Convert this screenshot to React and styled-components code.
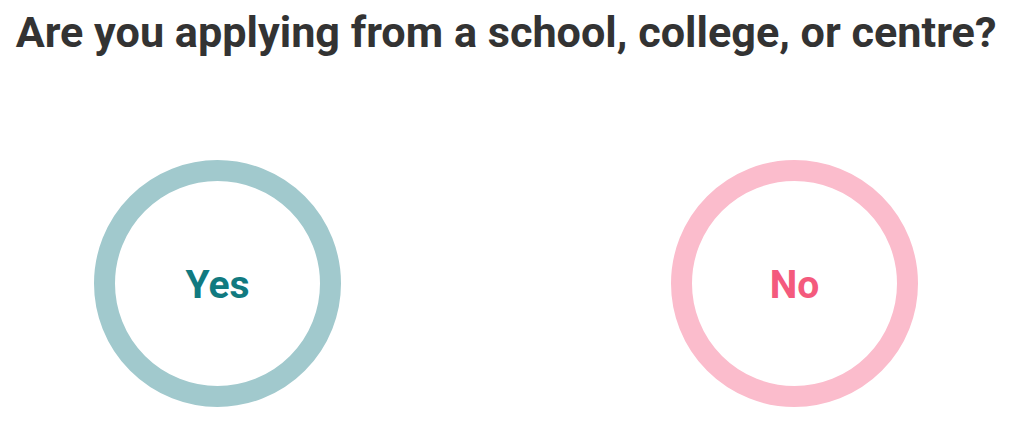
import React from "react";
import styled, { createGlobalStyle } from "styled-components";

const Global = createGlobalStyle`
  html, body { margin: 0; padding: 0; background: #ffffff; }
  body { font-family: Roboto, "Liberation Sans", Arial, sans-serif; }
`;

const Page = styled.div`
  width: 1012px;
  padding-top: 8px;
`;

const Heading = styled.h1`
  margin: 0;
  font-family: Roboto, "Liberation Sans", Arial, sans-serif;
  font-weight: 700;
  font-size: 43.2px;
  line-height: 50px;
  color: #333333;
  text-align: center;
`;

const Options = styled.div`
  display: flex;
  justify-content: space-between;
  padding: 0 94px 0 94px;
  margin-top: 102px;
`;

const Choice = styled.button`
  box-sizing: border-box;
  width: 247px;
  height: 247px;
  border-radius: 50%;
  border: 21px solid ${(p) => p.$ring};
  background: #ffffff;
  display: flex;
  align-items: center;
  justify-content: center;
  padding: 3px 0 0;
  cursor: pointer;
  font-family: Roboto, "Liberation Sans", Arial, sans-serif;
  font-weight: 700;
  font-size: 39px;
  color: ${(p) => p.$text};
`;

export default function App() {
  return (
    <>
      <Global />
      <Page>
        <Heading>Are you applying from a school, college, or centre?</Heading>
        <Options>
          <Choice $ring="#a1c9cd" $text="#117a80">Yes</Choice>
          <Choice $ring="#fbbccc" $text="#f45a7d">No</Choice>
        </Options>
      </Page>
    </>
  );
}
